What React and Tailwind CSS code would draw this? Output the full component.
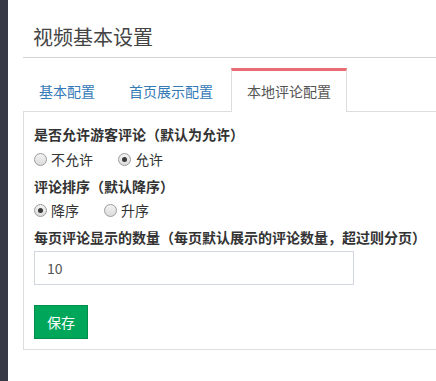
import { useState } from "react";

const tabs = ["基本配置", "首页展示配置", "本地评论配置"];

const Radio = ({ checked, label, onClick }) => (
  <label className="flex items-center cursor-pointer" onClick={onClick}>
    <span className="mr-[4px] flex h-[13px] w-[13px] items-center justify-center rounded-full border border-[#9c9c9c] bg-gradient-to-b from-[#f2f2f2] to-[#dcdcdc]">
      {checked && <span className="h-[5px] w-[5px] rounded-full bg-[#3a3a3a]" />}
    </span>
    <span>{label}</span>
  </label>
);

export default function App() {
  const [active, setActive] = useState(2);
  const [guest, setGuest] = useState(true);
  const [order, setOrder] = useState("desc");
  const [perPage, setPerPage] = useState("10");

  return (
    <div
      className="flex min-h-[381px] overflow-hidden bg-white text-[14px] text-[#333] [font-kerning:none] [text-spacing-trim:space-all]"
      style={{ fontFamily: '"Noto Sans CJK SC", "Noto Sans", sans-serif' }}
    >
      <div className="w-2 shrink-0 bg-[#373a45]" />
      <div className="flex-1 pl-[15px]">
        <div className="border-b border-[#d4d4d4] pb-[6px] pl-[10px] pt-[23px] text-[20px] leading-[28px] text-[#444]">
          视频基本设置
        </div>

        <div className="mt-[10px] flex">
          {tabs.map((t, i) =>
            i === active ? (
              <button
                key={t}
                className="relative z-10 -mb-px mr-[2px] border-x border-t-[3px] border-x-[#ddd] border-t-[#e96b74] bg-white px-[15px] pb-[11px] pt-[10px] leading-[20px] text-[#555]"
                onClick={() => setActive(i)}
              >
                {t}
              </button>
            ) : (
              <button
                key={t}
                className="mr-[2px] border-x border-t-[3px] border-transparent px-[15px] py-[10px] leading-[20px] text-[#337ab7]"
                onClick={() => setActive(i)}
              >
                {t}
              </button>
            )
          )}
        </div>

        <div className="border-y border-l border-[#ddd] px-[10px] pb-[10px] pt-[12px] leading-[20px]">
          <div className="font-bold">是否允许游客评论（默认为允许）</div>
          <div className="mt-[5px] flex gap-[25px]">
            <Radio label="不允许" checked={!guest} onClick={() => setGuest(false)} />
            <Radio label="允许" checked={guest} onClick={() => setGuest(true)} />
          </div>

          <div className="mt-[7px] font-bold">评论排序（默认降序）</div>
          <div className="mt-[4px] flex gap-[25px]">
            <Radio label="降序" checked={order === "desc"} onClick={() => setOrder("desc")} />
            <Radio label="升序" checked={order === "asc"} onClick={() => setOrder("asc")} />
          </div>

          <div className="mt-[7px] font-bold">每页评论显示的数量（每页默认展示的评论数量，超过则分页）</div>
          <input
            value={perPage}
            onChange={(e) => setPerPage(e.target.value)}
            className="mt-[4px] block h-[34px] w-[320px] border border-[#d2d6de] px-[12px] text-[14px] text-[#555] outline-none"
          />

          <button className="mt-[20px] h-[34px] border border-[#008d4c] bg-[#00a65a] px-[12px] leading-[20px] text-white">
            保存
          </button>
        </div>
      </div>
    </div>
  );
}
